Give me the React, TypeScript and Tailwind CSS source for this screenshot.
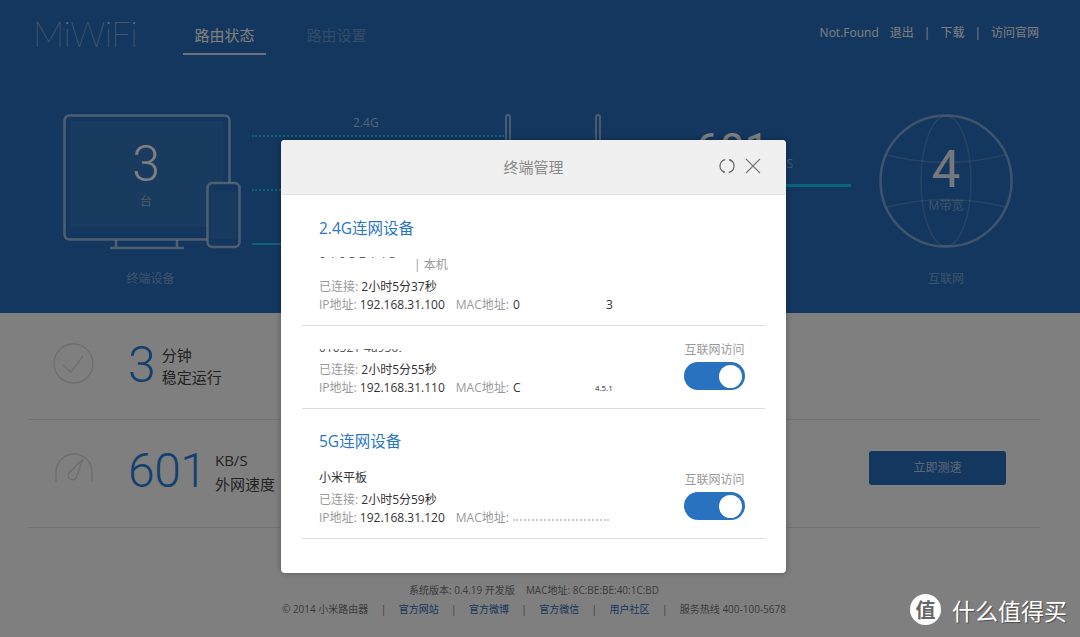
const cjk = "font-['Open_Sans','Noto_Sans_CJK_SC',sans-serif]"

function TvIcon() {
  return (
    <svg width="178" height="136" viewBox="0 0 178 136" fill="none" className="block">
      <rect x="7" y="7" width="153" height="106" fill="#ffffff" fillOpacity="0.06" />
      <rect x="1.5" y="1.5" width="165" height="124" rx="5" stroke="#ffffff" strokeOpacity="0.55" strokeWidth="2.5" />
      <path d="M53 126v7M114 126v7M47 134h74" stroke="#ffffff" strokeOpacity="0.55" strokeWidth="2.5" />
      <rect x="144.5" y="69" width="32" height="64" rx="5" fill="#286ebe" stroke="#ffffff" strokeOpacity="0.55" strokeWidth="2.5" />
      <rect x="148" y="78" width="25" height="47" fill="#ffffff" fillOpacity="0.06" />
    </svg>
  )
}

function GlobeIcon() {
  return (
    <svg width="134" height="134" viewBox="0 0 134 134" fill="none" className="block">
      <circle cx="67" cy="67" r="65.5" stroke="#ffffff" strokeOpacity="0.4" strokeWidth="2.5" />
      <ellipse cx="67" cy="67" rx="25" ry="65" stroke="#ffffff" strokeOpacity="0.18" strokeWidth="1.5" />
      <path d="M8 41Q67 56 126 41M8 93Q67 78 126 93" stroke="#ffffff" strokeOpacity="0.18" strokeWidth="1.5" />
    </svg>
  )
}

function CheckIcon() {
  return (
    <svg width="41" height="41" viewBox="0 0 41 41" fill="none" className="block">
      <circle cx="20.5" cy="20.5" r="19.5" stroke="#dcdcdc" strokeWidth="1.3" />
      <path d="M10 22l8 7 12-16" stroke="#dcdcdc" strokeWidth="1.3" />
    </svg>
  )
}

function GaugeIcon() {
  return (
    <svg width="38" height="30" viewBox="0 0 38 30" fill="none" className="block">
      <path d="M1 29v-10a18 18 0 0 1 36 0v10" stroke="#dcdcdc" strokeWidth="1.4" />
      <path d="M28 6L14 20a4 4 0 1 0 7 5z" stroke="#dcdcdc" strokeWidth="1.4" />
    </svg>
  )
}

function RefreshIcon() {
  return (
    <svg width="16" height="16" viewBox="0 0 16 16" fill="none" className="block">
      <path d="M6.2 1.6A6.6 6.6 0 0 0 5 14.1M9.8 14.4A6.6 6.6 0 0 0 11 1.9" stroke="#666" strokeWidth="1.2" />
      <path d="M9.6 1.2l2.6.2-1 2.3zM6.4 14.8l-2.6-.2 1-2.3z" fill="#666" />
    </svg>
  )
}

function CloseIcon() {
  return (
    <svg width="16" height="16" viewBox="0 0 16 16" fill="none" className="block">
      <path d="M1 1l14 14M15 1L1 15" stroke="#777" strokeWidth="1.1" />
    </svg>
  )
}

function Toggle() {
  return (
    <div className="flex h-[28px] w-[61px] items-center justify-end rounded-full bg-[#2872c0] pr-[3px]">
      <div className="size-[23px] rounded-full bg-white" />
    </div>
  )
}

function DeviceRow({
  name,
  time,
  ip,
  mac,
  toggle,
  heightClass,
}: {
  name: React.ReactNode
  time: string
  ip: string
  mac: React.ReactNode
  toggle?: boolean
  heightClass: string
}) {
  return (
    <div className={`mx-[21px] flex items-end justify-between border-b border-[#dddddd] pb-[11px] pl-[17px] pr-[20px] ${heightClass}`}>
      <div className="text-[12px] leading-[18px]">
        {name}
        <div className="text-[#999]">
          已连接: <span className="text-[#333]">{time}</span>
        </div>
        <div className="flex text-[#999]">
          <span>
            IP地址: <span className="text-[#333]">{ip}</span>
          </span>
          <span className="ml-[11px]">MAC地址: </span>
          {mac}
        </div>
      </div>
      {toggle && (
        <div className="mb-[7px] flex flex-col items-center gap-[4px] text-[12px] leading-[17px] text-[#999]">
          <span>互联网访问</span>
          <Toggle />
        </div>
      )}
    </div>
  )
}

function Modal() {
  return (
    <div className={`absolute left-[281px] top-[140px] h-[433px] w-[505px] overflow-hidden rounded-[4px] bg-white shadow-[0_0_6px_rgba(0,0,0,0.3)] ${cjk}`}>
      <div className="relative flex h-[55px] items-center justify-center border-b border-[#e4e4e4] bg-[#f0f0f0] text-[15px] text-[#888]">
        终端管理
        <div className="absolute right-[25px] top-[18px] flex items-center gap-[10px]">
          <RefreshIcon />
          <CloseIcon />
        </div>
      </div>
      <div className="pl-[38px] pt-[22px] text-[15.5px] leading-[22px] text-[#2a76c4]">2.4G连网设备</div>
      <DeviceRow
        heightClass="h-[87px]"
        time="2小时5分37秒"
        ip="192.168.31.100"
        name={
          <div className="mb-[5px] flex h-[17px] items-center">
            <div className="mt-[-12px] h-[3px] w-[80px] overflow-hidden">
              <div className="mt-[-12px] whitespace-nowrap text-[#555]">0 1 0 5 2 1 4 a 9</div>
            </div>
            <span className="ml-[15px] text-[#999]">| 本机</span>
          </div>
        }
        mac={
          <span className="ml-[4px] flex w-[100px] justify-between text-[#333]">
            <span>0</span>
            <span>3</span>
          </span>
        }
      />
      <DeviceRow
        heightClass="h-[83px]"
        time="2小时5分55秒"
        ip="192.168.31.110"
        toggle
        name={
          <div className="mb-[8px] h-[4px] w-[82px] overflow-hidden">
            <div className="mt-[-10px] whitespace-nowrap text-[#555]">010521-4a9569</div>
          </div>
        }
        mac={
          <span className="ml-[4px] flex w-[100px] justify-between text-[#333]">
            <span>C</span>
            <span className="text-[8px]">4.5.1</span>
          </span>
        }
      />
      <div className="pl-[38px] pt-[21px] text-[15.5px] leading-[22px] text-[#2a76c4]">5G连网设备</div>
      <DeviceRow
        heightClass="h-[87px]"
        time="2小时5分59秒"
        ip="192.168.31.120"
        toggle
        name={<div className="mb-[4px] text-[#333]">小米平板</div>}
        mac={<span className="ml-[4px] mt-[10px] h-[3px] w-[96px] border-t-[2px] border-dotted border-[#ccc]" />}
      />
    </div>
  )
}

function TopNav() {
  return (
    <div className={`flex h-[114px] items-start justify-between pl-[33px] pr-[41px] ${cjk}`}>
      <div className="flex items-start">
        <div className="mt-[11px] w-[103px] font-['Lato',sans-serif] text-[35px] font-thin leading-[44px] tracking-[-0.5px] text-white/80">MiWiFi</div>
        <div className="ml-[47px] mt-[24px] flex gap-[29px] text-[15px]">
          <div className="w-[83px] border-b-2 border-white/80 pb-[6px] text-center leading-[23px] text-white">路由状态</div>
          <div className="w-[83px] text-center leading-[23px] text-white/30">路由设置</div>
        </div>
      </div>
      <div className="mt-[24px] flex text-[12px] leading-[18px] text-white">
        <span>Not.Found</span>
        <span className="ml-[11px]">退出</span>
        <span className="mx-[10px]">|</span>
        <span>下载</span>
        <span className="mx-[10px]">|</span>
        <span>访问官网</span>
      </div>
    </div>
  )
}

function Hero() {
  return (
    <div className={`flex items-start ${cjk}`}>
      <div className="ml-[63px] w-[178px]">
        <div className="relative">
          <TvIcon />
          <div className="absolute left-0 top-[21px] w-[166px] text-center font-['Roboto',sans-serif] text-[50px] font-light leading-[58px] text-white">3</div>
          <div className="absolute left-0 top-[79px] w-[166px] text-center text-[12px] text-white/50">台</div>
        </div>
        <div className="mt-[20px] pr-[3px] text-center text-[12px] leading-[18px] text-white/40">终端设备</div>
      </div>

      <div className="ml-[11px] w-[252px]">
        <div className="pl-[101px] text-[12px] leading-[18px] text-white/60">2.4G</div>
        <div className="mt-[3px] border-t-[2px] border-dotted border-[#14c8f0]" />
        <div className="mt-[52px] border-t-[2px] border-dotted border-[#14c8f0]" />
        <div className="mt-[52px] border-t-[2px] border-[#14c8f0]" />
      </div>

      <div className="ml-[1px] flex gap-[84px]">
        <div className="h-[60px] w-[6px] rounded-t-[3px] border-2 border-white/50" />
        <div className="h-[60px] w-[6px] rounded-t-[3px] border-2 border-white/50" />
      </div>

      <div className="ml-[68px] w-[182px]">
        <div className="mt-[7px] pl-[26px] font-['Roboto',sans-serif] text-[44px] leading-[58px] text-white">601</div>
        <div className="mt-[-23px] pl-[98px] text-[12px] leading-[16px] text-white/50">KB/S</div>
        <div className="mt-[12px] h-[3px] w-[182px] bg-[#14c8f0]" />
      </div>

      <div className="ml-[28px] w-[134px]">
        <div className="relative">
          <GlobeIcon />
          <div className="absolute left-0 top-[27px] w-full text-center font-['Roboto',sans-serif] text-[51px] leading-[58px] text-white/90">4</div>
          <div className="absolute left-0 top-[83px] w-full text-center text-[12px] text-white/40">M带宽</div>
        </div>
        <div className="mt-[22px] text-center text-[12px] leading-[18px] text-white/40">互联网</div>
      </div>
    </div>
  )
}

function Stats() {
  return (
    <div className={`mx-[28px] ${cjk}`}>
      <div className="flex h-[107px] items-center border-b border-[#e4e4e4] pb-[2px] pl-[25px]">
        <div className="mb-[4px]">
          <CheckIcon />
        </div>
        <div className="ml-[34px] font-['Roboto',sans-serif] text-[50px] font-light leading-[58px] text-[#2680dc]">3</div>
        <div className="ml-[6px] mt-[2px] text-[15px] leading-[22px] text-[#444]">
          <div>分钟</div>
          <div>稳定运行</div>
        </div>
      </div>
      <div className="flex h-[108px] items-center justify-between border-b border-[#e4e4e4] pb-[12px] pl-[27px] pr-[34px]">
        <div className="mt-[6px] flex items-center">
          <div className="mb-[6px]">
            <GaugeIcon />
          </div>
          <div className="ml-[35px] w-[87px] font-['Roboto',sans-serif] text-[48px] font-light leading-[58px] tracking-[-0.5px] text-[#2680dc]">601</div>
          <div className="mt-[2px] whitespace-nowrap text-[15px] leading-[24px] text-[#444]">
            <div>KB/S</div>
            <div>外网速度</div>
          </div>
        </div>
        <button type="button" className="h-[34px] w-[137px] rounded-[3px] bg-[#286ebe] text-[12px] text-white/70">
          立即测速
        </button>
      </div>
    </div>
  )
}

function Footer() {
  return (
    <div className={`flex flex-col items-center pt-[53px] text-[10px] text-[#777] ${cjk}`}>
      <div className="flex gap-[11px] leading-[18px]">
        <span>系统版本: 0.4.19 开发版</span>
        <span>MAC地址: 8C:BE:BE:40:1C:BD</span>
      </div>
      <div className="mt-[1px] flex gap-[12.4px] leading-[18px]">
        <span>© 2014 小米路由器</span>
        <span>|</span>
        <span className="text-[#2a6cb4]">官方网站</span>
        <span>|</span>
        <span className="text-[#2a6cb4]">官方微博</span>
        <span>|</span>
        <span className="text-[#2a6cb4]">官方微信</span>
        <span>|</span>
        <span className="text-[#2a6cb4]">用户社区</span>
        <span>|</span>
        <span>服务热线 400-100-5678</span>
      </div>
    </div>
  )
}

function Watermark() {
  return (
    <div className="absolute left-[910px] top-[594px] flex items-center font-['Noto_Sans_CJK_SC',sans-serif]">
      <div className="flex size-[31px] items-center justify-center rounded-full bg-white text-[20px] font-bold text-[#666]">值</div>
      <div className="ml-[11px] text-[23px] leading-[30px] text-white [text-shadow:1px_1px_1px_rgba(0,0,0,0.4)]">什么值得买</div>
    </div>
  )
}

export default function App() {
  return (
    <div className="relative h-[637px] w-[1080px] overflow-hidden bg-white">
      <div className="h-[313px] bg-[#286ebe]">
        <TopNav />
        <Hero />
      </div>
      <div className="w-[1068px]">
        <Stats />
        <Footer />
      </div>
      <div className="absolute inset-0 bg-black/50" />
      <Modal />
      <Watermark />
    </div>
  )
}
